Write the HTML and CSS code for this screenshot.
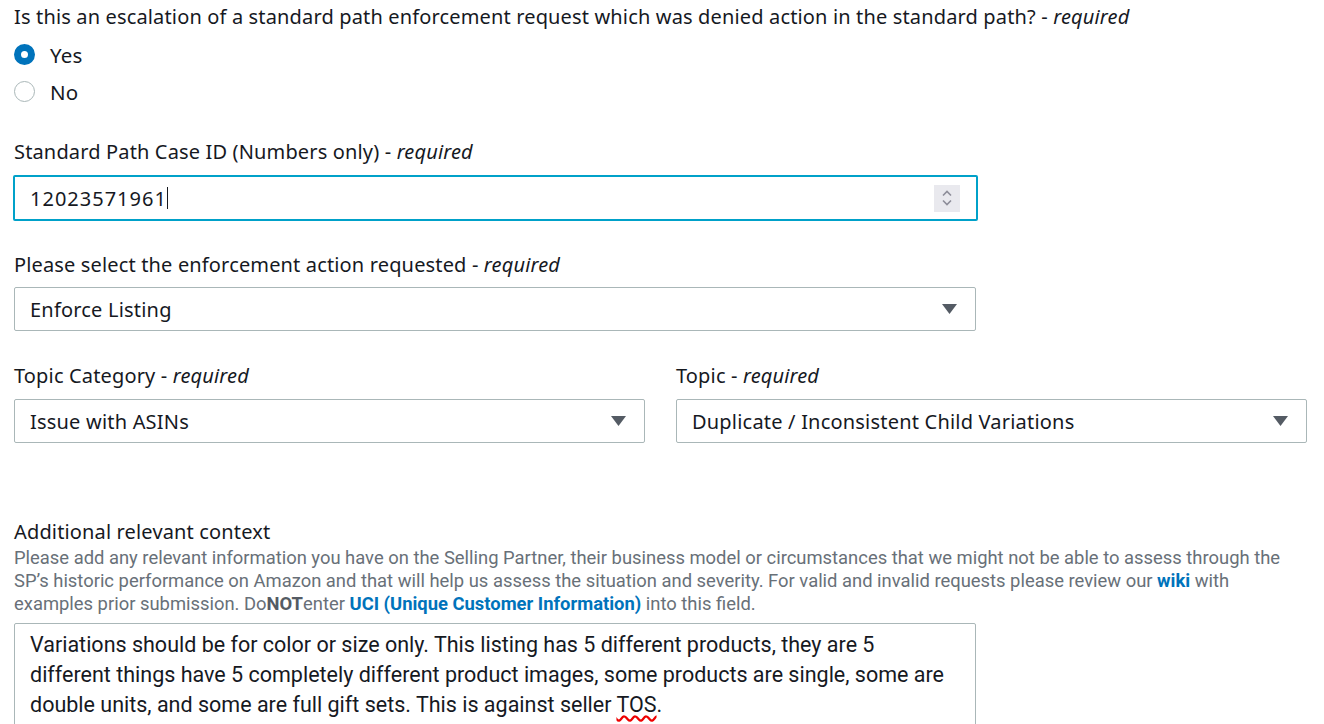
FILE: index.html
```
<!DOCTYPE html>
<html lang="en">
<head>
  <meta charset="UTF-8" />
  <title>Escalation request</title>
  <link rel="stylesheet" href="styles.css">
</head>
<body>
<form class="escalation-form">
  <div class="question">
    Is this an escalation of a standard path enforcement request which was denied action in the standard path? - <em>required</em>
  </div>
  <div class="radio-group">
    <label class="radio-row"><span class="radio checked"></span>Yes</label>
    <label class="radio-row"><span class="radio"></span>No</label>
  </div>

  <div class="field field-case">
    <div class="field-label">Standard Path Case ID (Numbers only) - <em>required</em></div>
    <div class="input focused">
      <span class="value">12023571961</span><span class="caret"></span>
      <span class="spinner">
        <svg width="12" height="18" viewBox="0 0 12 18"><path d="M2 6.5 6 2.5 10 6.5M2 11.5 6 15.5 10 11.5" fill="none" stroke="#8d8d99" stroke-width="1.6"/></svg>
      </span>
    </div>
  </div>

  <div class="field field-action">
    <div class="field-label">Please select the enforcement action requested - <em>required</em></div>
    <div class="select">
      <span>Enforce Listing</span>
      <svg class="arrow" width="15" height="10" viewBox="0 0 15 10"><path d="M0 0H15L7.5 10Z" fill="#545b64"/></svg>
    </div>
  </div>

  <div class="field-row">
    <div class="field">
      <div class="field-label">Topic Category - <em>required</em></div>
      <div class="select">
        <span>Issue with ASINs</span>
        <svg class="arrow" width="15" height="10" viewBox="0 0 15 10"><path d="M0 0H15L7.5 10Z" fill="#545b64"/></svg>
      </div>
    </div>
    <div class="field">
      <div class="field-label">Topic - <em>required</em></div>
      <div class="select">
        <span>Duplicate / Inconsistent Child Variations</span>
        <svg class="arrow" width="15" height="10" viewBox="0 0 15 10"><path d="M0 0H15L7.5 10Z" fill="#545b64"/></svg>
      </div>
    </div>
  </div>

  <div class="field field-context">
    <div class="field-label">Additional relevant context</div>
    <div class="help">
      Please add any relevant information you have on the Selling Partner, their business model or circumstances that we might not be able to assess through the SP’s historic performance on Amazon and that will help us assess the situation and severity. For valid and invalid requests please review our <a href="#">wiki</a> with examples prior submission. Do<b>NOT</b>enter <a href="#">UCI (Unique Customer Information)</a> into this field.
    </div>
    <div class="textarea">
      Variations should be for color or size only. This listing has 5 different products, they are 5 different things have 5 completely different product images, some products are single, some are double units, and some are full gift sets. This is against seller <span class="misspelled">TOS</span>.
    </div>
  </div>
</form>
</body>
</html>
```
FILE: styles.css
```
body {
  margin: 0;
  padding: 0 17px 0 14px;
  background: #fff;
  color: #16191f;
  font-family: "Noto Sans", Arial, sans-serif;
  font-size: 20px;
  letter-spacing: 0.15px;
  overflow: hidden;
}
em { font-style: italic; }

.question {
  margin-top: 5px;
  line-height: 24px;
}

.radio-group { margin-top: 7px; }
.radio-row {
  display: flex;
  align-items: center;
  height: 37px;
  gap: 15px;
  font-size: 20.5px;
}
.radio {
  width: 21px;
  height: 21px;
  box-sizing: border-box;
  border-radius: 50%;
  border: 1.5px solid #aab7b8;
  background: #fff;
}
.radio.checked {
  border: 7px solid #0073bb;
}

.field-label {
  line-height: 24px;
  margin-bottom: 11px;
}
.field-case { margin-top: 30px; }
.field-action { margin-top: 32px; }
.field-action .field-label { margin-bottom: 10px; }
.field-row {
  display: grid;
  grid-template-columns: 631px 631px;
  gap: 31px;
  margin-top: 33px;
}
.field-context { margin-top: 77px; }
.field-context .field-label { margin-bottom: 0; }

.input, .select {
  display: flex;
  align-items: center;
  box-sizing: border-box;
  height: 44px;
  border: 1px solid #aab7b8;
  border-radius: 2px;
  padding: 0 18px 0 15px;
  font-size: 20px;
  letter-spacing: 0.2px;
}
.input.focused {
  width: 965px;
  height: 46px;
  margin-left: -1px;
  border: 2px solid #00a1c9;
  padding-right: 16px;
  letter-spacing: 1px;
}
.caret {
  width: 1px;
  height: 22px;
  background: #16191f;
}
.spinner {
  margin-left: auto;
  width: 26px;
  height: 27px;
  background: #e9e9ee;
  display: flex;
  align-items: center;
  justify-content: center;
}
.field-action .select { width: 962px; }
.select .arrow { margin-left: auto; }

.help {
  margin-top: 2px;
  font-family: Roboto, "Liberation Sans", sans-serif;
  font-size: 18.4px;
  letter-spacing: 0;
  line-height: 23px;
  color: #687078;
}
.help a {
  color: #0073bb;
  font-weight: bold;
  text-decoration: none;
}
.help b { color: #545b64; }

.textarea {
  margin-top: 8px;
  width: 962px;
  box-sizing: border-box;
  border: 1px solid #aab7b8;
  border-radius: 2px;
  padding: 6px 15px 20px;
  font-family: Roboto, "Liberation Sans", sans-serif;
  font-size: 21.5px;
  letter-spacing: 0;
  line-height: 30px;
}
.misspelled {
  text-decoration: underline wavy #e00;
  text-underline-offset: 3px;
}
```
